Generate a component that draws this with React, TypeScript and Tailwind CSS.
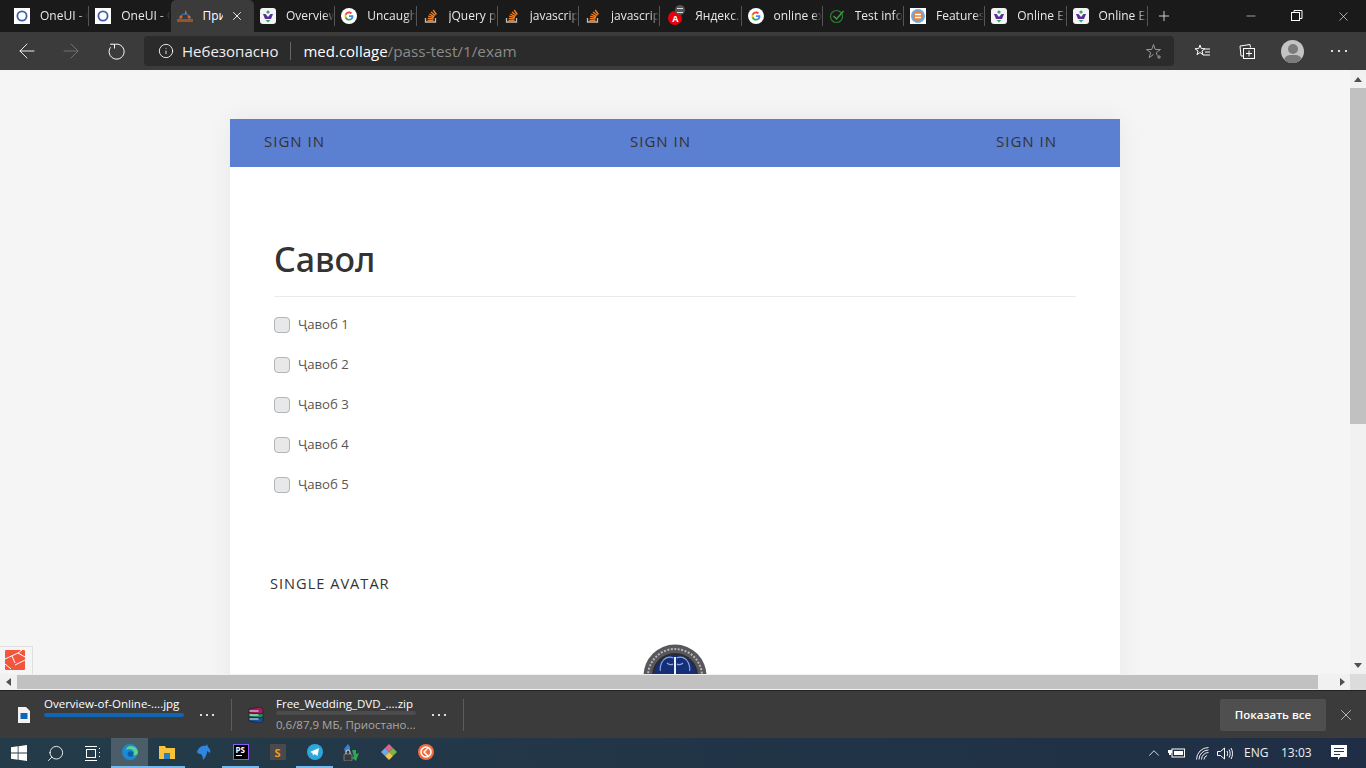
import React from 'react'
import { ArrowLeft, ArrowRight, Info, X, Plus, Minus, Search, ChevronUp } from 'lucide-react'

const uiFont = "font-['Open_Sans','Noto_Sans',sans-serif]"

function CircleFav() {
  return (
    <svg width="16" height="16" viewBox="0 0 16 16">
      <rect width="16" height="16" fill="#fff" />
      <circle cx="8" cy="8" r="4.6" fill="none" stroke="#3f5fa8" strokeWidth="1.8" />
    </svg>
  )
}

function BrandFav() {
  return (
    <svg width="16" height="16" viewBox="0 0 16 16">
      <rect width="16" height="16" rx="3" fill="#f4f4f4" />
      <path d="M3 6h2.500l2.500 3 2.500-3H13l-2 5H5z" fill="#5b2a9d" />
      <circle cx="8" cy="4" r="1.600" fill="#27ae60" />
      <path d="M5.500 12h5L8 14.500z" fill="#27ae60" />
    </svg>
  )
}

function GoogleFav() {
  return (
    <svg width="16" height="16" viewBox="0 0 16 16">
      <circle cx="8" cy="8" r="8" fill="#fff" />
      <path d="M12.400 8.200c0-.3 0-.6-.1-.9H8v1.700h2.500c-.1.6-.4 1-.9 1.400v1.100h1.500c.8-.8 1.300-1.900 1.300-3.300z" fill="#4285f4" />
      <path d="M8 12.600c1.200 0 2.200-.4 3-1.100l-1.500-1.100c-.4.300-.9.400-1.500.400-1.200 0-2.100-.8-2.500-1.800H4v1.200c.8 1.500 2.300 2.400 4 2.400z" fill="#34a853" />
      <path d="M5.500 9c-.2-.6-.2-1.300 0-1.900V5.900H4c-.6 1.300-.6 2.900 0 4.200z" fill="#fbbc05" />
      <path d="M8 5.300c.7 0 1.300.2 1.800.7l1.300-1.300C10.300 3.900 9.200 3.400 8 3.400c-1.700 0-3.200 1-4 2.500l1.500 1.200C5.900 6.100 6.800 5.300 8 5.300z" fill="#ea4335" />
    </svg>
  )
}

function StackFav() {
  return (
    <svg width="16" height="16" viewBox="0 0 16 16" fill="none">
      <path d="M2.500 10v4h10v-4" stroke="#bcbbbb" strokeWidth="1.300" />
      <path d="M4.500 12.300h6M4.700 10.300l5.800.6M5.200 8.200l5.600 1.500M6.300 6l5 2.600M8 3.900l4.300 3.600M10.200 2l3.200 4.500" stroke="#f48024" strokeWidth="1.300" />
    </svg>
  )
}

function AngularFav() {
  return (
    <div className="relative w-[19px] h-4">
      <div className="absolute left-[2px] top-[3px] w-[14px] h-[14px] rounded-full bg-[#e8000d] flex items-center justify-center text-white text-[9px] font-bold leading-none">A</div>
      <div className="absolute left-[9px] top-[-3px] w-[10px] h-[10px] rounded-full bg-[#555] flex items-center justify-center">
        <div className="w-[6px] h-[5px] border-t border-b border-[#ddd]" />
      </div>
    </div>
  )
}

function CheckFav() {
  return (
    <svg width="16" height="16" viewBox="0 0 16 16" fill="none">
      <circle cx="7.500" cy="8.500" r="6" stroke="#2e7d32" strokeWidth="1.200" />
      <path d="M4.500 8l3 3 7-8" stroke="#3f9a44" strokeWidth="1.500" />
    </svg>
  )
}

function SiteFav() {
  return (
    <svg width="16" height="16" viewBox="0 0 16 16">
      <rect width="16" height="16" fill="#fff" />
      <circle cx="8" cy="8" r="7" fill="#6fa8dc" />
      <circle cx="8" cy="8" r="4.800" fill="#e8833a" />
      <path d="M5 6.500h6M5 9.500h6" stroke="#fff" strokeWidth="1.300" />
    </svg>
  )
}

function LoaderFav() {
  return (
    <svg width="18" height="16" viewBox="0 0 18 16" fill="none">
      <path d="M4 11a5 5 0 0 1 10 0" stroke="#2f6fb0" strokeWidth="1.500" />
      <path d="M9 2l2 3-2 2z" fill="#d9651e" />
      <rect x="1" y="11" width="16" height="3" fill="#a0521d" />
      <circle cx="5" cy="9" r="1.500" fill="#d9651e" />
      <circle cx="13" cy="9" r="1.500" fill="#d9651e" />
    </svg>
  )
}

const tabs = [
  { title: 'OneUI - OneUI', icon: <CircleFav /> },
  { title: 'OneUI - OneUI', icon: <CircleFav /> },
  { title: 'Приложение', icon: <LoaderFav />, active: true },
  { title: 'Overview of', icon: <BrandFav /> },
  { title: 'Uncaught Type', icon: <GoogleFav /> },
  { title: 'jQuery plugin', icon: <StackFav /> },
  { title: 'javascript - ho', icon: <StackFav /> },
  { title: 'javascript - ho', icon: <StackFav /> },
  { title: 'Яндекс.Пер', icon: <AngularFav /> },
  { title: 'online exam', icon: <GoogleFav /> },
  { title: 'Test info test', icon: <CheckFav /> },
  { title: 'Features', icon: <SiteFav /> },
  { title: 'Online Exam', icon: <BrandFav /> },
  { title: 'Online Exam', icon: <BrandFav /> },
]

function TabStrip() {
  return (
    <div className="h-8 bg-[#1a1a1a] flex items-stretch pl-[8px] shrink-0">
      {tabs.map((tab, i) =>
        tab.active ? (
          <div key={i} className="w-[83.500px] shrink-0 bg-[#3b3b3b] rounded-t-[5px] flex items-center pl-[5px]">
            <div className="w-[18px] shrink-0 flex justify-center">{tab.icon}</div>
            <span className="ml-[9px] w-[20px] overflow-hidden whitespace-nowrap text-[12px] text-white">{tab.title}</span>
            <X className="ml-[7px] w-[14px] h-[14px] text-white" strokeWidth={1.500} />
          </div>
        ) : (
          <div key={i} className="w-[81.250px] shrink-0 flex items-center pl-[6px]">
            <div className="min-w-4 shrink-0 flex justify-center">{tab.icon}</div>
            <span className="ml-[10px] w-[49px] overflow-hidden whitespace-nowrap text-[12px] text-[#e8e8e8] [mask-image:linear-gradient(to_right,black_80%,transparent)]">{tab.title}</span>
            {i !== 1 && <div className="ml-auto w-px h-5 bg-[#555] shrink-0" />}
          </div>
        )
      )}
      <div className="flex items-center ml-[8px]">
        <Plus className="w-[16px] h-[16px] text-[#e8e8e8]" strokeWidth={1.300} />
      </div>
      <div className="ml-auto flex items-center h-full">
        <div className="w-[46px] flex justify-center"><Minus className="w-[14px] h-[14px] text-white" strokeWidth={1} /></div>
        <div className="w-[46px] flex justify-center">
          <svg width="12" height="12" viewBox="0 0 12 12" fill="none" stroke="#fff">
            <rect x="0.500" y="2.500" width="8" height="8" />
            <path d="M3 2.500V.500h8v8H8.500" />
          </svg>
        </div>
        <div className="w-[46px] flex justify-center"><X className="w-[15px] h-[15px] text-white" strokeWidth={1} /></div>
      </div>
    </div>
  )
}

function Toolbar() {
  return (
    <div className="h-[38px] bg-[#3b3b3b] flex items-center shrink-0">
      <div className="w-[144px] shrink-0 flex items-center pl-[15px] gap-[20px]">
        <ArrowLeft className="w-6 h-6 text-white" strokeWidth={0.900} />
        <ArrowRight className="w-6 h-6 text-[#777]" strokeWidth={0.900} />
        <svg width="18" height="18" viewBox="0 0 18 18" fill="none" stroke="#fff" strokeWidth="1" className="ml-[5px]">
          <path d="M6 2.600a7.500 7.500 0 1 1-3.500 2.700" />
          <path d="M6.500 6.500V2.200H2.200" />
        </svg>
      </div>
      <div className="w-[1030px] h-[30px] bg-[#2b2b2b] rounded-[4px] flex items-center pl-[14px] pr-[11px]">
        <Info className="w-4 h-4 text-white" strokeWidth={1.300} />
        <span className="ml-[8px] text-[#eee] text-[15px]">Небезопасно</span>
        <div className="w-px h-[18px] bg-[#666] ml-[12px]" />
        <span className="ml-[12px] text-white text-[15px]">med.collage</span>
        <span className="text-[#8a8a8a] text-[15.300px]">/pass-test/1/exam</span>
        <svg width="17" height="17" viewBox="0 0 17 17" fill="none" stroke="#999" strokeWidth="1" className="ml-auto">
          <path d="M7.500 1.500l1.800 5h5.200l-4.200 3.100 1 3M7.500 1.500l-1.800 5H.5l4.200 3.100-1.600 5 4.400-3.100" />
          <path d="M13 12v4M11 14h4" />
        </svg>
      </div>
      <div className="flex-1 flex items-center pl-[20px]">
        <svg width="17" height="16" viewBox="0 0 17 16" fill="none" stroke="#fff" strokeWidth="1">
          <path d="M6 2l1.300 3.600 3.700.1-3 2.300 1 3.700L6 9.500l-3 2.200 1-3.700-3-2.300 3.700-.1z" />
          <path d="M11 6h5M11 9h5M9 12h7" />
        </svg>
        <svg width="17" height="17" viewBox="0 0 17 17" fill="none" stroke="#fff" strokeWidth="1" className="ml-[28px]">
          <rect x="4.500" y="5.500" width="11" height="10" />
          <path d="M10 7.500v6M7 10.500h6M4 13H2L1 3l10-1.500.5 3" />
        </svg>
        <div className="w-[23px] h-[23px] ml-[25px] rounded-full bg-[#c4c4c4] overflow-hidden flex flex-col items-center">
          <div className="w-[10px] h-[10px] rounded-full bg-[#7b7b7b] mt-[4px] shrink-0" />
          <div className="w-[18px] h-[12px] rounded-full bg-[#7b7b7b] mt-[1px] shrink-0" />
        </div>
        <div className="flex gap-[5px] ml-[27px]">
          <div className="w-[2px] h-[2px] bg-[#ddd]" />
          <div className="w-[2px] h-[2px] bg-[#ddd]" />
          <div className="w-[2px] h-[2px] bg-[#ddd]" />
        </div>
      </div>
    </div>
  )
}

function Avatar() {
  return (
    <svg width="64" height="64" viewBox="0 0 64 64">
      <circle cx="32" cy="32" r="31.500" fill="#57575c" />
      <circle cx="32" cy="32" r="27" fill="none" stroke="#b5b5ba" strokeWidth="2" strokeDasharray="2 1.500" />
      <circle cx="32" cy="32" r="22" fill="#142f78" stroke="#2b2b30" strokeWidth="2" />
      <path d="M30.500 14c-5-2-10 0-12 5-1 3-2 6-1 8M24 19c2 2 5 2 6 1" fill="none" stroke="#8ea6d8" strokeWidth="1.200" />
      <path d="M33.500 14c5-2 10 0 12 5 1 3 2 6 1 8M40 19c-2 2-5 2-6 1" fill="none" stroke="#8ea6d8" strokeWidth="1.200" />
      <rect x="31" y="13" width="2" height="30" fill="#e8eef8" />
    </svg>
  )
}

function CheckRow({ label }: { label: string }) {
  return (
    <label className="flex items-center h-10">
      <span className="w-4 h-4 rounded-[4px] bg-[#e8e8e8] border border-[#b0b5b9] shrink-0" />
      <span className="ml-2 text-[13.200px] text-[#575757]">{label}</span>
    </label>
  )
}

function Page() {
  return (
    <div className="flex-1 min-h-0 flex flex-col relative">
      <div className="flex-1 min-h-0 flex">
        <div className="flex-1 bg-[#f5f5f5] overflow-hidden pt-[49px] pl-[230px]">
          <div className="w-[890px] bg-white shadow-[0_0_24px_rgba(0,0,0,0.06)] h-[700px]">
            <div className="h-12 bg-[#5b7fd1] grid grid-cols-[366px_366px_1fr] pl-[34px] pb-[3px] items-center text-[15px] tracking-[1px] font-medium text-[#333] font-['Open_Sans',sans-serif]">
              <span>SIGN IN</span>
              <span>SIGN IN</span>
              <span>SIGN IN</span>
            </div>
            <div className="pt-[66px] px-[44px]">
              <h1 className="text-[34px] font-medium leading-[52px] text-[#333] font-['Noto_Sans',sans-serif] pb-[11px] border-b border-[#ebebeb]">Савол</h1>
              <div className="pt-[8px] font-['Open_Sans',sans-serif]">
                <CheckRow label="Ҷавоб 1" />
                <CheckRow label="Ҷавоб 2" />
                <CheckRow label="Ҷавоб 3" />
                <CheckRow label="Ҷавоб 4" />
                <CheckRow label="Ҷавоб 5" />
              </div>
            </div>
            <div className="pl-[40px] pt-[68px] text-[14.600px] tracking-[1px] font-medium text-[#333] leading-[20px] font-['Open_Sans',sans-serif]">SINGLE AVATAR</div>
            <div className="flex justify-center pt-[51px]">
              <Avatar />
            </div>
          </div>
        </div>
        <div className="w-4 bg-[#f1f1f1] flex flex-col items-center shrink-0">
          <div className="h-[18px] flex items-center justify-center">
            <div className="w-0 h-0 border-x-[4px] border-x-transparent border-b-[5px] border-b-[#505050]" />
          </div>
          <div className="w-full h-[336px] bg-[#c1c1c1]" />
          <div className="mt-auto h-[18px] flex items-center justify-center">
            <div className="w-0 h-0 border-x-[4px] border-x-transparent border-t-[5px] border-t-[#505050]" />
          </div>
        </div>
      </div>
      <div className="h-4 flex bg-[#f1f1f1] shrink-0">
        <div className="w-[17px] flex items-center justify-center shrink-0">
          <div className="w-0 h-0 border-y-[4px] border-y-transparent border-r-[5px] border-r-[#505050]" />
        </div>
        <div className="w-[1301px] h-[14px] mt-[1px] bg-[#c1c1c1]" />
        <div className="flex-1 flex items-center pl-[22px]">
          <div className="w-0 h-0 border-y-[4px] border-y-transparent border-l-[5px] border-l-[#505050]" />
        </div>
        <div className="w-4 bg-[#dcdcdc]" />
      </div>
      {/* debug bar tab, fixed to the corner */}
      <div className="absolute left-0 bottom-[16px] w-[33px] h-[28px] border-t border-r border-[#e0e0e0] bg-[#f5f5f5] pl-[5px] pt-[3px] overflow-hidden">
        <svg width="20" height="20" viewBox="0 0 20 20">
          <rect width="20" height="20" rx="1" fill="#f4553d" />
          <path d="M0 9L13 3l7 4M0 14l6 5M7 6l3 7M13 3l4-3M20 10l-10 5" stroke="#fff" strokeWidth="1" fill="none" />
        </svg>
      </div>
    </div>
  )
}

function Dots() {
  return (
    <div className="flex gap-[4px]">
      <div className="w-[2px] h-[2px] bg-[#ddd]" />
      <div className="w-[2px] h-[2px] bg-[#ddd]" />
      <div className="w-[2px] h-[2px] bg-[#ddd]" />
    </div>
  )
}

function DownloadBar() {
  return (
    <div className="h-[48px] bg-[#3b3b3b] border-t border-[#222] flex items-center shrink-0 text-[11.500px]">
      <div className="w-[232px] h-full flex items-center shrink-0">
        <div className="w-[44px] pl-[18px] shrink-0">
          <svg width="12" height="16" viewBox="0 0 12 16">
            <path d="M0 0h8l4 4v12H0z" fill="#f2f2f2" />
            <rect x="2.500" y="6" width="7" height="6" fill="#0f66b3" />
          </svg>
        </div>
        <div className="w-[140px] self-start pt-[5px]">
          <div className="text-white leading-[16px] whitespace-nowrap">Overview-of-Online-....jpg</div>
          <div className="h-[4px] bg-[#0f66b3] rounded-[2px] mt-[1px]" />
        </div>
        <div className="ml-[16px]"><Dots /></div>
      </div>
      <div className="w-px h-[32px] bg-[#5c5c5c] -ml-[1px]" />
      <div className="w-[232px] h-full flex items-center shrink-0">
        <div className="w-[44px] pl-[16px] shrink-0">
          <svg width="16" height="16" viewBox="0 0 16 16">
            <path d="M1 2l11-2 3 2v4l-3 1-11-1z" fill="#a01d5e" stroke="#111" strokeWidth="0.500" />
            <path d="M1 6l11 1 3-1v4l-3 1-11-1z" fill="#1e8f5a" stroke="#111" strokeWidth="0.500" />
            <path d="M1 10l11 1 3-1v4l-3 2-11-2z" fill="#1d4fa0" stroke="#111" strokeWidth="0.500" />
            <path d="M1.500 4h9M1.500 8h9M1.500 12h9" stroke="#f2f2f2" />
          </svg>
        </div>
        <div className="w-[140px]">
          <div className="text-white leading-[15px] whitespace-nowrap">Free_Wedding_DVD_....zip</div>
          <div className="h-[4px] bg-[#4c4c4c] rounded-[2px]" />
          <div className="text-[#a8a8a8] leading-[18px] whitespace-nowrap mt-[1px]">0,6/87,9 МБ, Приостано...</div>
        </div>
        <div className="ml-[16px]"><Dots /></div>
      </div>
      <div className="w-px h-[32px] bg-[#5c5c5c] -ml-[1px]" />
      <div className="ml-auto w-[106px] h-8 bg-[#4f4f4f] rounded-[2px] flex items-center justify-center text-white font-semibold">Показать все</div>
      <div className="w-[40px] flex justify-center">
        <X className="w-[18px] h-[18px] text-[#ddd]" strokeWidth={1} />
      </div>
    </div>
  )
}

function TaskIcon({ children, underline, active }: { children: React.ReactNode; underline?: boolean; active?: boolean }) {
  return (
    <div className={`w-[37px] h-full flex items-center justify-center border-b-2 ${underline ? 'border-[#76b9ed]' : 'border-transparent'} ${active ? 'bg-[#4a5d68]' : ''}`}>
      {children}
    </div>
  )
}

function Taskbar() {
  return (
    <div className="h-[30px] bg-gradient-to-r from-[#243c49] to-[#1f2e45] flex items-stretch shrink-0 text-white">
      <div className="w-[37px] flex items-center justify-center">
        <svg width="16" height="16" viewBox="0 0 16 16" fill="#fff">
          <path d="M0 2.300l6.700-1V7.600H0zM7.500 1.200L16 0v7.600H7.500zM0 8.400h6.700v6.300l-6.700-1zM7.500 8.400H16V16l-8.500-1.200z" />
        </svg>
      </div>
      <div className="w-[37px] flex items-center justify-center">
        <Search className="w-[19px] h-[19px] -scale-x-100" strokeWidth={1.100} />
      </div>
      <div className="w-[37px] flex items-center justify-center">
        <svg width="16" height="15" viewBox="0 0 16 15" fill="none" stroke="#fff">
          <rect x="1.500" y="3.500" width="9" height="8" />
          <path d="M0 .500h12M0 14.500h12M14.500 2v1M14.500 6v1M14.500 10v1" />
        </svg>
      </div>
      <TaskIcon active underline>
        <svg width="16" height="16" viewBox="0 0 16 16">
          <circle cx="8" cy="8" r="8" fill="#1b8ad3" />
          <path d="M16 9c0-4-3-7-7-7-3 0-5 2-5 4 3-2 8-1 8 3 0 1-1 2-1 2 2 1 4 0 5-2z" fill="#5fd38a" />
          <circle cx="8.500" cy="10" r="2.800" fill="#0c5ea8" />
        </svg>
      </TaskIcon>
      <TaskIcon underline>
        <svg width="16" height="15" viewBox="0 0 16 15">
          <path d="M0 1h6l1 2h9v11H0z" fill="#f8c33c" />
          <rect x="5" y="8" width="6" height="6" fill="#2a7fc1" />
        </svg>
      </TaskIcon>
      <TaskIcon>
        <svg width="16" height="16" viewBox="0 0 16 16">
          <path d="M1 8c1-4 5-7 9-6l1-2 1 3c2 2 3 4 2 6l-3-2c0 3-1 6-4 9 0-3-1-5-2-6-1 0-3 0-4-2z" fill="#2f86e0" />
        </svg>
      </TaskIcon>
      <TaskIcon underline>
        <div className="w-4 h-4 bg-black border border-[#8a5cf0] flex flex-col pl-[2px] text-[8px] font-bold leading-[9px]">
          PS
          <div className="w-[6px] h-px bg-white mt-[1px]" />
        </div>
      </TaskIcon>
      <TaskIcon>
        <div className="w-4 h-4 bg-[#4a4a4a] rounded-[1px] flex items-center justify-center text-[#f79a1e] text-[11px] font-bold leading-none">S</div>
      </TaskIcon>
      <TaskIcon underline>
        <svg width="16" height="16" viewBox="0 0 16 16">
          <circle cx="8" cy="8" r="8" fill="#2ea6da" />
          <path d="M3 8l9-4-1.500 8-3-2-1.500 1.500-.5-2.500z" fill="#fff" />
        </svg>
      </TaskIcon>
      <TaskIcon>
        <svg width="17" height="17" viewBox="0 0 17 17">
          <path d="M1 5l4-5 2 3v3H4v2H2z" fill="#3b7fd0" />
          <rect x="1" y="10" width="8" height="7" rx="1" fill="#3a3a3a" stroke="#bbb" strokeWidth="0.500" />
          <path d="M3 10V8a2 2 0 0 1 4 0v2" fill="none" stroke="#ddd" />
          <path d="M9 6h4v4l3-1-3 8-5-4h3z" fill="#2fa84f" />
        </svg>
      </TaskIcon>
      <TaskIcon>
        <svg width="16" height="16" viewBox="0 0 16 16">
          <path d="M8 0l4 4-4 4-4-4z" fill="#e0618a" />
          <path d="M4 4l4 4-4 4-4-4z" fill="#6fa8e8" />
          <path d="M12 4l4 4-4 4-4-4z" fill="#7ab648" />
          <path d="M8 8l4 4-4 4-4-4z" fill="#f2c14e" />
        </svg>
      </TaskIcon>
      <TaskIcon>
        <svg width="16" height="16" viewBox="0 0 16 16">
          <circle cx="8" cy="8" r="8" fill="#f26d3d" />
          <circle cx="8" cy="8" r="5" fill="none" stroke="#fff" strokeWidth="1.500" />
          <path d="M10 4L6 8l4 4" fill="none" stroke="#fff" strokeWidth="1.500" />
        </svg>
      </TaskIcon>
      <div className="ml-auto flex items-center">
        <ChevronUp className="w-[18px] h-[18px] mr-[5px]" strokeWidth={1.100} />
        <svg width="17" height="12" viewBox="0 0 17 12" className="mr-[11px]">
          <rect x="4" y="2" width="12.500" height="8" fill="none" stroke="#fff" />
          <rect x="6" y="4" width="9" height="4" fill="#fff" />
          <path d="M0 3h4v3H3v2H1V6H0z" fill="#fff" />
        </svg>
        <svg width="13" height="13" viewBox="0 0 13 13" fill="none" stroke="#fff" strokeWidth="0.900" className="mr-[8px]">
          <path d="M.500 12.500a12 12 0 0 1 12-12M3 12.500a9.500 9.500 0 0 1 9.500-9.500M5.500 12.500a7 7 0 0 1 7-7M8 12.500a4.500 4.500 0 0 1 3-4" />
        </svg>
        <svg width="16" height="13" viewBox="0 0 16 13" fill="none" stroke="#fff" className="mr-[11px]">
          <path d="M.500 4.500h3l4-3.500v11l-4-3.500h-3zM10 4c.800 1.500.800 3.500 0 5M12 2.500c1.500 2.500 1.500 5.500 0 8M14 1c2 3 2 8 0 11" />
        </svg>
        <span className="text-[12px] w-[23px] text-[#f0f0f0]">ENG</span>
        <span className="text-[12px] ml-[14px] w-[27px] text-[#f0f0f0]">13:03</span>
        <div className="w-[58px] flex justify-center pl-[4px]">
          <svg width="16" height="16" viewBox="0 0 16 16">
            <path d="M0 0h16v12H9l-2 3v-3H0z" fill="#fff" />
            <path d="M3 3.500h10M3 6.500h10M3 9.500h6" stroke="#24344a" />
          </svg>
        </div>
      </div>
    </div>
  )
}

export default function App() {
  return (
    <div className={`w-[1366px] h-[768px] flex flex-col overflow-hidden ${uiFont}`}>
      <TabStrip />
      <Toolbar />
      <Page />
      <DownloadBar />
      <Taskbar />
    </div>
  )
}
